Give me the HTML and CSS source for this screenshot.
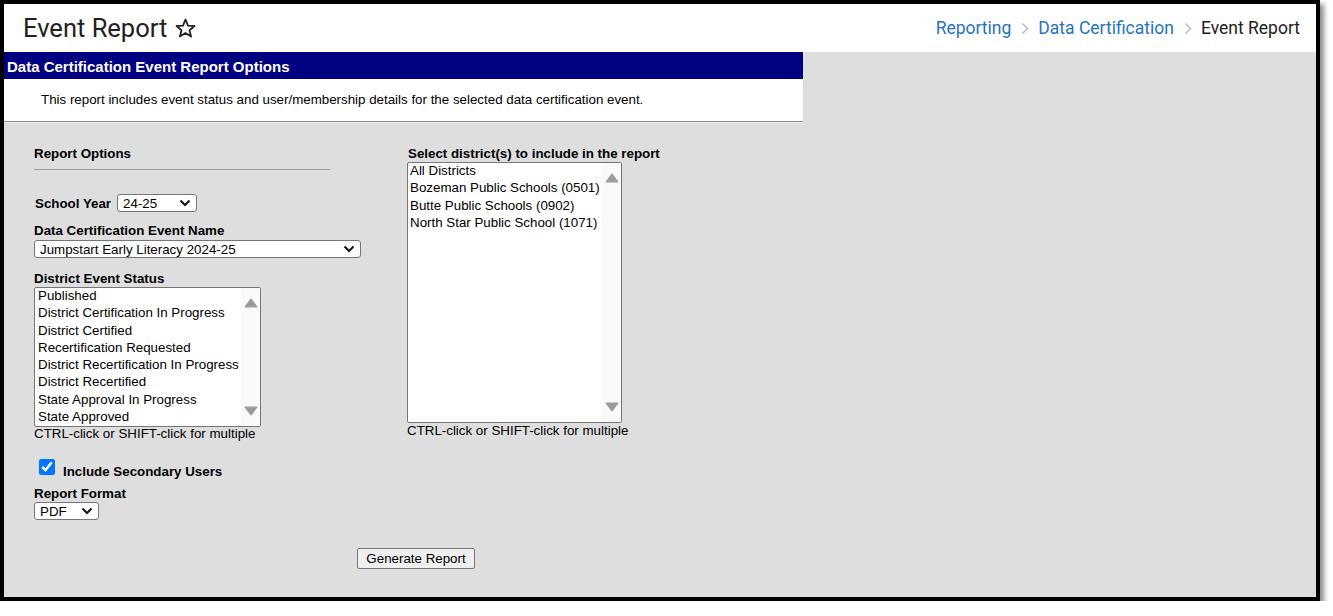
FILE: index.html
```html
<!DOCTYPE html>
<html lang="en">
<head>
    <meta charset="UTF-8">
    <meta name="viewport" content="width=device-width, initial-scale=1.0">
    <title>Event Report</title>
    <link rel="stylesheet" href="styles.css">
</head>
<body>

<div class="frame">
    <header class="page-header">
        <h1 class="page-title">Event Report
            <svg class="star" width="21" height="20" viewBox="0 0 21 20">
                <polygon points="10.5,1.5 13,7.6 19.5,8 14.5,12.2 16.1,18.6 10.5,15.1 4.9,18.6 6.5,12.2 1.5,8 8,7.6" fill="none" stroke="#222" stroke-width="1.8" stroke-linejoin="round"/>
            </svg>
        </h1>
        <nav class="crumbs">
            <a href="#">Reporting</a>
            <svg class="crumb-sep" width="8" height="13" viewBox="0 0 8 13"><path d="M1.5 1.5 L6.5 6.5 L1.5 11.5" fill="none" stroke="#b5b5b5" stroke-width="1.4"/></svg>
            <a href="#">Data Certification</a>
            <svg class="crumb-sep" width="8" height="13" viewBox="0 0 8 13"><path d="M1.5 1.5 L6.5 6.5 L1.5 11.5" fill="none" stroke="#b5b5b5" stroke-width="1.4"/></svg>
            <span class="crumb-current">Event Report</span>
        </nav>
    </header>

    <main class="workspace">
        <div class="report-panel">
            <div class="panel-title">Data Certification Event Report Options</div>
            <div class="panel-desc">This report includes event status and user/membership details for the selected data certification event.</div>

            <form class="report-form" id="reportForm">
                <div class="form-cols">
                    <div class="col-left">
                        <div class="section-head">Report Options</div>

                        <div class="year-row">
                            <label for="schoolYear" class="inline-label">School Year</label>
                            <span class="select-wrap">
                                <select id="schoolYear" class="select-year">
                                    <option>24-25</option>
                                    <option>23-24</option>
                                </select>
                                <svg class="chev" width="12" height="8" viewBox="0 0 12 8"><path d="M1.5 1.5 L6 6 L10.5 1.5" fill="none" stroke="#111" stroke-width="2"/></svg>
                            </span>
                        </div>

                        <label for="eventName" class="field-label label-event">Data Certification Event Name</label>
                        <span class="select-wrap">
                            <select id="eventName" class="select-event">
                                <option>Jumpstart Early Literacy 2024-25</option>
                            </select>
                            <svg class="chev" width="12" height="8" viewBox="0 0 12 8"><path d="M1.5 1.5 L6 6 L10.5 1.5" fill="none" stroke="#111" stroke-width="2"/></svg>
                        </span>

                        <div class="field-label label-status">District Event Status</div>
                        <div class="listbox listbox-status">
                            <div class="opts">
                                <div class="opt">Published</div>
                                <div class="opt">District Certification In Progress</div>
                                <div class="opt">District Certified</div>
                                <div class="opt">Recertification Requested</div>
                                <div class="opt">District Recertification In Progress</div>
                                <div class="opt">District Recertified</div>
                                <div class="opt">State Approval In Progress</div>
                                <div class="opt">State Approved</div>
                            </div>
                            <div class="scroll">
                                <svg width="14" height="10" viewBox="0 0 14 10"><polygon points="7,1.2 12.8,8.8 1.2,8.8" fill="#9a9a9a" stroke="#9a9a9a" stroke-width="1.2" stroke-linejoin="round"/></svg>
                                <svg width="14" height="10" viewBox="0 0 14 10"><polygon points="1.2,1.2 12.8,1.2 7,8.8" fill="#9a9a9a" stroke="#9a9a9a" stroke-width="1.2" stroke-linejoin="round"/></svg>
                            </div>
                        </div>
                        <div class="hint">CTRL-click or SHIFT-click for multiple</div>

                        <div class="check-row">
                            <input type="checkbox" id="secondary" checked>
                            <label for="secondary" class="check-label">Include Secondary Users</label>
                        </div>

                        <label for="format" class="field-label label-format">Report Format</label>
                        <span class="select-wrap">
                            <select id="format" class="select-format">
                                <option>PDF</option>
                                <option>CSV</option>
                            </select>
                            <svg class="chev" width="12" height="8" viewBox="0 0 12 8"><path d="M1.5 1.5 L6 6 L10.5 1.5" fill="none" stroke="#111" stroke-width="2"/></svg>
                        </span>
                    </div>

                    <div class="col-right">
                        <div class="field-label label-district">Select district(s) to include in the report</div>
                        <div class="listbox listbox-district">
                            <div class="opts">
                                <div class="opt">All Districts</div>
                                <div class="opt">Bozeman Public Schools (0501)</div>
                                <div class="opt">Butte Public Schools (0902)</div>
                                <div class="opt">North Star Public School (1071)</div>
                            </div>
                            <div class="scroll">
                                <svg width="14" height="10" viewBox="0 0 14 10"><polygon points="7,1.2 12.8,8.8 1.2,8.8" fill="#9a9a9a" stroke="#9a9a9a" stroke-width="1.2" stroke-linejoin="round"/></svg>
                                <svg width="14" height="10" viewBox="0 0 14 10"><polygon points="1.2,1.2 12.8,1.2 7,8.8" fill="#9a9a9a" stroke="#9a9a9a" stroke-width="1.2" stroke-linejoin="round"/></svg>
                            </div>
                        </div>
                        <div class="hint hint-right">CTRL-click or SHIFT-click for multiple</div>
                    </div>
                </div>

                <div class="form-actions">
                    <button type="submit" class="generate-btn">Generate Report</button>
                </div>
            </form>
        </div>
    </main>
</div>

</body>
</html>
```

FILE: styles.css
```css
body {
    margin: 0;
    background: #fff;
    font-family: "Liberation Sans", Arial, sans-serif;
    font-size: 13.33px;
    color: #000;
}

.frame {
    width: 1312px;
    height: 593px;
    border: 4px solid #000;
    box-shadow: 4px 4px 5px rgba(0, 0, 0, 0.45);
    display: flex;
    flex-direction: column;
    background: #dedede;
}

/* top header */
.page-header {
    height: 48px;
    flex-shrink: 0;
    background: #fff;
    display: flex;
    align-items: center;
    justify-content: space-between;
    padding: 0 16px 0 19px;
}

.page-title {
    margin: 0;
    display: flex;
    align-items: center;
    font-family: Roboto, "Liberation Sans", sans-serif;
    font-size: 25.5px;
    font-weight: 400;
    color: #212121;
}

.star {
    margin-left: 8px;
    margin-top: -1px;
}

.crumbs {
    display: flex;
    align-items: center;
    font-family: Roboto, "Liberation Sans", sans-serif;
    font-size: 17.5px;
}

.crumbs a {
    color: #1f74c2;
    text-decoration: none;
}

.crumb-sep {
    margin: 0 9px 0 10px;
}

.crumb-current {
    color: #212121;
}

/* main area */
.workspace {
    flex: 1;
    background: #dedede;
}

.report-panel {
    width: 799px;
}

.panel-title {
    height: 27px;
    box-sizing: border-box;
    padding: 3px 0 0 3px;
    line-height: 24px;
    background: #000080;
    color: #fff;
    font-size: 15px;
    font-weight: bold;
}

.panel-desc {
    height: 43px;
    box-sizing: border-box;
    padding: 13px 0 0 37px;
    line-height: 16px;
    background: #fff;
    border-bottom: 1px solid #8a8a8a;
    box-shadow: 0 1px 0 #f2f2f2;
}

.report-form {
    padding: 24px 0 0 30px;
}

.form-cols {
    display: flex;
}

.col-left {
    width: 373px;
}

.section-head {
    width: 296px;
    font-weight: bold;
    line-height: 16px;
    padding-bottom: 7px;
    border-bottom: 1px solid #a3a3a3;
}

.year-row {
    display: flex;
    align-items: center;
    height: 18px;
    margin-top: 24px;
}

.inline-label {
    font-weight: bold;
    margin-left: 1px;
    margin-right: 6px;
}

.field-label {
    display: block;
    font-weight: bold;
    line-height: 16px;
}

.label-event {
    margin-top: 11px;
    margin-bottom: 1px;
}

.label-status {
    margin-top: 13px;
}

.label-format {
    margin-top: 6px;
}

.label-district {
    margin-left: 1px;
}

/* selects */
.select-wrap {
    position: relative;
    display: inline-block;
    vertical-align: top;
}

.select-wrap select {
    appearance: none;
    -webkit-appearance: none;
    display: block;
    height: 18px;
    box-sizing: border-box;
    padding: 0 0 0 5px;
    border: 1px solid #767676;
    border-radius: 3px;
    background: #fff;
    font-family: "Liberation Sans", Arial, sans-serif;
    font-size: 13.33px;
    color: #000;
}

.select-wrap .chev {
    position: absolute;
    right: 6px;
    top: 5px;
    pointer-events: none;
}

.select-year {
    width: 80px;
}

.select-event {
    width: 327px;
}

.select-format {
    width: 65px;
}

/* list boxes */
.listbox {
    display: flex;
    box-sizing: border-box;
    border: 1px solid #767676;
    border-radius: 2px;
    background: #fff;
}

.listbox-status {
    width: 227px;
    height: 140px;
}

.listbox-district {
    width: 215px;
    height: 261px;
}

.opts {
    flex: 1;
    overflow: hidden;
}

.opt {
    height: 17.25px;
    line-height: 15px;
    padding-left: 3px;
    white-space: nowrap;
}

.listbox-district .opt {
    padding-left: 2px;
}

.scroll {
    width: 19px;
    background: #f9f9f9;
    display: flex;
    flex-direction: column;
    justify-content: space-between;
    align-items: center;
    padding: 10px 0;
}

.hint {
    line-height: 14px;
}

.hint-right {
    line-height: 16px;
}

.check-row {
    display: flex;
    align-items: flex-start;
    margin-top: 18px;
}

.check-row input {
    width: 16px;
    height: 16px;
    margin: 0 0 0 5px;
    accent-color: #0075ff;
}

.check-label {
    font-weight: bold;
    line-height: 16px;
    margin: 5px 0 0 8px;
}

.form-actions {
    margin-top: 28px;
    padding-left: 323px;
}

.generate-btn {
    width: 118px;
    height: 21px;
    padding: 0;
    background: #efefef;
    border: 1px solid #767676;
    border-radius: 2px;
    font-family: "Liberation Sans", Arial, sans-serif;
    font-size: 13.33px;
    color: #000;
    cursor: pointer;
}

.generate-btn:hover {
    background: #e5e5e5;
}
```
